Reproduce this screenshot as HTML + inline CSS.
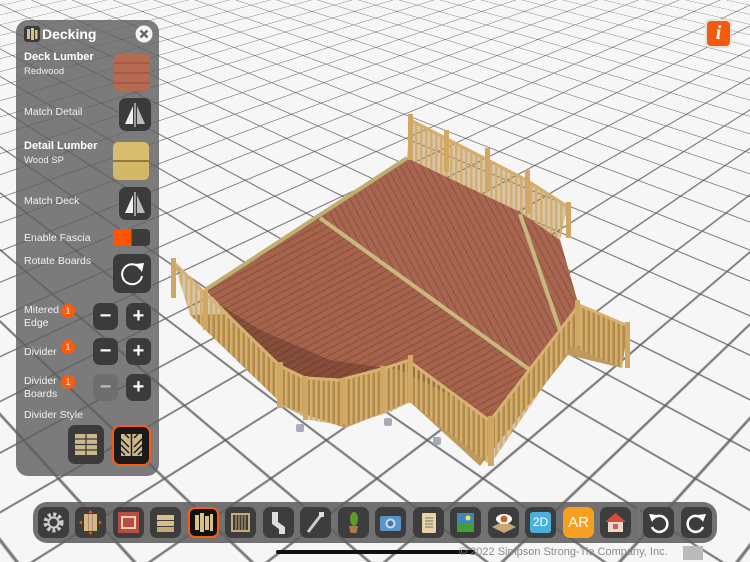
<!DOCTYPE html>
<html><head><meta charset="utf-8"><style>
*{margin:0;padding:0;box-sizing:border-box}
body{width:750px;height:562px;overflow:hidden;background:#f4f4f4;font-family:"Liberation Sans",sans-serif;position:relative}
#scene{position:absolute;left:0;top:0;width:750px;height:562px;overflow:hidden;perspective:845px;perspective-origin:375px 281px}
#plane{position:absolute;left:-1625px;top:-1719px;width:4000px;height:4000px;transform-origin:2000px 2000px;transform:rotateX(55.5deg) rotateZ(45deg);
background-image:linear-gradient(90deg,rgba(90,90,90,.8) 2px,transparent 2px),linear-gradient(0deg,rgba(90,90,90,.8) 2px,transparent 2px);background-size:56px 56px;background-color:#f6f6f6}
.abs{position:absolute}
#panel{position:absolute;left:16px;top:20px;width:143px;height:456px;background:rgba(95,95,95,.82);border-radius:12px}
.t{position:absolute;color:#f2f2f2;font-size:10.5px;white-space:nowrap}
.b{font-weight:bold;color:#fff;font-size:11px}
.s{font-size:9.5px}
.btn{position:absolute;background:#3b3b3b;border-radius:7px}
.badge{position:absolute;width:14px;height:14px;border-radius:7px;background:#ff5a0a;color:#fff;font-size:9px;text-align:center;line-height:14px}
.pm{color:#fff;font-size:20px;font-weight:bold;text-align:center;line-height:26px}
#bar{position:absolute;left:33px;top:502px;width:684px;height:41px;background:rgba(95,95,95,.88);border-radius:14px}
.tb{position:absolute;top:5px;width:31px;height:31px;background:#3d3d3d;border-radius:7px}
</style></head><body>
<div id="scene"><div id="plane"></div></div>
<svg class="abs" style="left:0;top:0" width="750" height="562">
<defs>
<pattern id="bd" width="6" height="6" patternUnits="userSpaceOnUse" patternTransform="rotate(-28)"><rect width="6" height="6" fill="#a5634c"/><rect width="6" height="1" fill="#8a4e3b"/></pattern>
<pattern id="bd2" width="6" height="6" patternUnits="userSpaceOnUse" patternTransform="rotate(62)"><rect width="6" height="6" fill="#a86650"/><rect width="6" height="1" fill="#8e503e"/></pattern>
<pattern id="bal" width="5" height="10" patternUnits="userSpaceOnUse"><rect width="5" height="10" fill="rgba(150,110,50,.35)"/><rect width="2.5" height="10" fill="#d4ae6a"/></pattern>
</defs>
<polygon points="190,315 285,407 345,428 410,402 480,466 568,355 622,368 628,327 577,305" fill="#c09a5c"/>
<polygon points="407,158 520,212 560,240 578,303 490,420 410,362 385,368 340,380 305,378 280,365 205,290 218,280" fill="url(#bd)"/>
<polygon points="407,158 520,212 560,240 578,303 530,370 320,218" fill="url(#bd2)"/>
<polyline points="407,158 205,290" stroke="#bfae70" stroke-width="4" fill="none"/>
<line x1="320" y1="218" x2="530" y2="370" stroke="#c8b87e" stroke-width="4"/>
<line x1="520" y1="214" x2="560" y2="330" stroke="#c8b87e" stroke-width="4"/>
<polygon points="205,295 280,365 305,378 340,380 385,368 410,362 480,412 470,405 400,370 330,360 260,330" fill="rgba(60,30,20,.3)"/>
<polygon points="410,118 526,178 568,205 560,240 520,212 407,158" fill="url(#bal)"/>
<polyline points="410,120 526,180 568,207" stroke="#d4ae6a" stroke-width="3" fill="none"/>
<g fill="#d0a864"><rect x="408" y="114" width="5" height="46"/><rect x="444" y="130" width="5" height="42"/><rect x="485" y="148" width="5" height="42"/><rect x="525" y="170" width="5" height="44"/><rect x="566" y="202" width="5" height="36"/></g>
<polygon points="173,260 280,365 285,407 190,315" fill="url(#bal)"/>
<polyline points="173,262 280,366" stroke="#d8b270" stroke-width="3" fill="none"/>
<polygon points="280,365 305,378 340,380 385,368 410,360 410,402 390,412 345,426 310,420 285,407" fill="url(#bal)"/>
<polyline points="280,366 305,378 340,380 385,368 410,360" stroke="#d8b270" stroke-width="3" fill="none"/>
<polygon points="410,360 490,420 490,465 410,402" fill="url(#bal)"/>
<polygon points="490,420 577,307 570,348 490,465" fill="url(#bal)"/>
<polyline points="410,362 490,421 577,308" stroke="#d8b270" stroke-width="3" fill="none"/>
<polygon points="577,303 628,325 622,368 570,345" fill="url(#bal)"/>
<polyline points="577,304 628,326" stroke="#d8b270" stroke-width="3" fill="none"/>
<g fill="#d0a864"><rect x="171" y="258" width="5" height="40"/><rect x="203" y="290" width="5" height="40"/><rect x="277" y="362" width="6" height="46"/><rect x="303" y="376" width="5" height="44"/><rect x="340" y="378" width="5" height="46"/><rect x="380" y="366" width="5" height="46"/><rect x="408" y="355" width="5" height="48"/><rect x="488" y="416" width="6" height="50"/><rect x="575" y="300" width="5" height="46"/><rect x="625" y="322" width="5" height="46"/></g>
<g fill="#aab"><rect x="296" y="424" width="8" height="8" rx="2"/><rect x="384" y="418" width="8" height="8" rx="2"/><rect x="433" y="437" width="8" height="8" rx="2"/></g>
</svg>
<div class="abs" style="left:705px;top:19px;width:27px;height:29px;border-radius:5px;background:#e9e0dc"></div>
<div class="abs" style="left:707px;top:21px;width:23px;height:25px;border-radius:4px;background:#f25a0f;color:#fff;font:italic bold 20px 'Liberation Serif',serif;text-align:center;line-height:25px">i</div>

<div id="panel"></div>
<svg class="abs" style="left:24px;top:26px" width="16" height="16"><rect width="16" height="16" rx="3" fill="#3a3a3a"/><rect x="3" y="3" width="3" height="10" fill="#d8c08a"/><rect x="7" y="2" width="3" height="12" fill="#d8c08a"/><rect x="11" y="4" width="2.5" height="9" fill="#d8c08a"/></svg>
<div class="t b" style="left:42px;top:26px;font-size:14px">Decking</div>
<svg class="abs" style="left:135px;top:25px" width="18" height="18"><circle cx="9" cy="9" r="8.5" fill="#f4f4f4"/><path d="M5.5 5.5L12.5 12.5M12.5 5.5L5.5 12.5" stroke="#666" stroke-width="2.6"/></svg>
<div class="t b" style="left:24px;top:51px">Deck Lumber</div>
<div class="t s" style="left:24px;top:66px">Redwood</div>
<div class="abs" style="left:114px;top:54px;width:36px;height:37px;border-radius:5px;background:repeating-linear-gradient(180deg,#b66a52 0 8px,#a45a44 8px 10px);"></div>
<div class="t" style="left:24px;top:106px">Match Detail</div>
<div class="btn" style="left:119px;top:98px;width:32px;height:33px"></div>
<svg class="abs" style="left:119px;top:98px" width="32" height="33"><polygon points="14,8 14,26 6,26" fill="#eee"/><polygon points="18,8 18,26 26,26" fill="#bbb"/><line x1="16" y1="5" x2="16" y2="29" stroke="#fff" stroke-width="1"/></svg>
<div class="t b" style="left:24px;top:140px">Detail Lumber</div>
<div class="t s" style="left:24px;top:155px">Wood SP</div>
<div class="abs" style="left:113px;top:142px;width:36px;height:38px;border-radius:5px;background:linear-gradient(180deg,#d9bd6e 0 48%,#8d7840 48% 52%,#d2b766 52%)"></div>
<div class="t" style="left:24px;top:195px">Match Deck</div>
<div class="btn" style="left:119px;top:187px;width:32px;height:33px"></div>
<svg class="abs" style="left:119px;top:187px" width="32" height="33"><polygon points="14,8 14,26 6,26" fill="#eee"/><polygon points="18,8 18,26 26,26" fill="#bbb"/><line x1="16" y1="5" x2="16" y2="29" stroke="#fff" stroke-width="1"/></svg>
<div class="t" style="left:24px;top:232px">Enable Fascia</div>
<div class="abs" style="left:113px;top:229px;width:37px;height:17px;border-radius:4px;background:linear-gradient(90deg,#ff5500 50%,#3b3b3b 50%)"></div>
<div class="t" style="left:24px;top:255px">Rotate Boards</div>
<div class="btn" style="left:113px;top:254px;width:38px;height:39px"></div>
<svg class="abs" style="left:113px;top:254px" width="38" height="39"><path d="M27 14A10 10 0 1 0 29 22" stroke="#fff" stroke-width="2" fill="none"/><polygon points="22,10 31,9 29,18" fill="#fff"/></svg>
<div class="t" style="left:24px;top:304px;line-height:13px">Mitered<br>Edge</div>
<div class="badge" style="left:61px;top:304px">1</div>
<div class="btn pm" style="left:93px;top:303px;width:25px;height:27px">−</div>
<div class="btn pm" style="left:126px;top:303px;width:25px;height:27px">+</div>
<div class="t" style="left:24px;top:346px">Divider</div>
<div class="badge" style="left:61px;top:340px">1</div>
<div class="btn pm" style="left:93px;top:338px;width:25px;height:27px">−</div>
<div class="btn pm" style="left:126px;top:338px;width:25px;height:27px">+</div>
<div class="t" style="left:24px;top:375px;line-height:13px">Divider<br>Boards</div>
<div class="badge" style="left:61px;top:375px">1</div>
<div class="btn pm" style="left:93px;top:374px;width:25px;height:27px;background:#6e6e6e;color:#bbb">−</div>
<div class="btn pm" style="left:126px;top:374px;width:25px;height:27px">+</div>
<div class="t" style="left:24px;top:409px">Divider Style</div>
<div class="btn" style="left:68px;top:425px;width:36px;height:39px"></div>
<svg class="abs" style="left:68px;top:425px" width="36" height="39"><rect x="7" y="9" width="22" height="21" fill="#cdb88a"/><path d="M18 9V30M7 14H29M7 19.5H29M7 25H29" stroke="#3b3b3b" stroke-width="1.3"/></svg>
<div class="abs" style="left:112px;top:425px;width:39px;height:41px;border-radius:8px;background:#1a1a1a;border:2px solid #ff5a0a"></div>
<svg class="abs" style="left:112px;top:425px" width="39" height="41"><rect x="9" y="9" width="21" height="22" fill="#cdb88a"/><path d="M19.5 9V31M9 14L17 22M9 20L17 28M9 26L13 30M30 14L22 22M30 20L22 28M30 26L26 30M13 9L17 13M26 9L22 13" stroke="#1a1a1a" stroke-width="1.5"/></svg>

<div id="bar">
<div class="tb" style="left:5px"><svg width="31" height="31"><circle cx="15.5" cy="15.5" r="8" stroke="#ccc" stroke-width="4" fill="none" stroke-dasharray="3 2.3"/><circle cx="15.5" cy="15.5" r="5" stroke="#ccc" stroke-width="2" fill="none"/></svg></div>
<div class="tb" style="left:42px"><svg width="31" height="31"><rect x="9" y="7" width="13" height="17" fill="#d9b879"/><path d="M13.5 7V24M17.5 7V24" stroke="#a88"/><path d="M15.5 3l2 3h-4zM15.5 28l2-3h-4zM4 15.5l3-2v4zM27 15.5l-3-2v4z" fill="#ff5a0a"/></svg></div>
<div class="tb" style="left:80px"><svg width="31" height="31"><rect x="5" y="5" width="21" height="21" fill="#b84c48"/><rect x="9" y="10" width="13" height="11" stroke="#f0d8a0" stroke-width="2" fill="none"/></svg></div>
<div class="tb" style="left:117px"><svg width="31" height="31"><rect x="7" y="8" width="17" height="5" fill="#d9bd86"/><rect x="7" y="14" width="17" height="5" fill="#d9bd86"/><rect x="7" y="20" width="17" height="5" fill="#c7a870"/></svg></div>
<div class="tb" style="left:155px;background:#111;border:2px solid #ff5a0a"><svg width="27" height="27"><rect x="5" y="6" width="4" height="15" fill="#d9c18c"/><rect x="10" y="4" width="4" height="19" fill="#d9c18c"/><rect x="15" y="7" width="4" height="14" fill="#d9c18c"/><rect x="20" y="5" width="3" height="17" fill="#d9c18c"/></svg></div>
<div class="tb" style="left:192px"><svg width="31" height="31"><rect x="7" y="7" width="17" height="17" stroke="#c8aa78" stroke-width="2" fill="none"/><path d="M11 7V24M14 7V24M17 7V24M20 7V24" stroke="#c8aa78"/></svg></div>
<div class="tb" style="left:230px"><svg width="31" height="31"><path d="M9 5h6v10l7 5v7h-6v-5l-7-5z" fill="#ddd"/></svg></div>
<div class="tb" style="left:267px"><svg width="31" height="31"><path d="M8 25L21 8" stroke="#ccc" stroke-width="3"/><rect x="19" y="5" width="5" height="5" fill="#ddd"/></svg></div>
<div class="tb" style="left:305px"><svg width="31" height="31"><path d="M11 19h9l-1.5 7h-6z" fill="#b07a4a"/><ellipse cx="16" cy="12" rx="4" ry="7" fill="#5c9a2c"/></svg></div>
<div class="tb" style="left:342px"><svg width="31" height="31"><rect x="5" y="9" width="21" height="15" rx="2" fill="#5a94c8"/><circle cx="15.5" cy="16.5" r="5" fill="#cde"/><circle cx="15.5" cy="16.5" r="3" fill="#4a78a8"/></svg></div>
<div class="tb" style="left:380px"><svg width="31" height="31"><rect x="9" y="6" width="14" height="20" rx="1" fill="#e8d2a6"/><path d="M12 11h8M12 14h8M12 17h8M12 20h8" stroke="#776"/></svg></div>
<div class="tb" style="left:417px"><svg width="31" height="31"><rect x="7" y="6" width="17" height="19" fill="#3a8ab8"/><rect x="7" y="17" width="17" height="8" fill="#4a9a3a"/><circle cx="18" cy="11" r="2.5" fill="#fd5"/></svg></div>
<div class="tb" style="left:455px"><svg width="31" height="31"><polygon points="4,20 16,14 28,20 16,26" fill="#c9a876"/><ellipse cx="16" cy="12" rx="8" ry="5" fill="#fff"/><circle cx="16" cy="12" r="3.5" fill="#c8602a"/></svg></div>
<div class="tb" style="left:492px"><div style="margin:5px;width:21px;height:21px;background:#4ab0e0;border-radius:3px;color:#fff;font-size:12px;text-align:center;line-height:21px">2D</div></div>
<div class="tb" style="left:530px;background:#f5a020;color:#fff;font-size:15px;text-align:center;line-height:31px">AR</div>
<div class="tb" style="left:567px"><svg width="31" height="31"><polygon points="5,15 15.5,6 26,15" fill="#d84a3a"/><rect x="8" y="15" width="15" height="10" fill="#f0d8c8"/><rect x="13" y="17" width="5" height="5" fill="#b66"/></svg></div>
<div class="abs" style="left:605px;top:6px;width:2px;height:29px;background:#777"></div>
<div class="tb" style="left:610px"><svg width="31" height="31"><path d="M10 12A8 8 0 1 1 9 20" stroke="#fff" stroke-width="2.5" fill="none"/><polygon points="6,7 14,8 9,15" fill="#fff"/></svg></div>
<div class="tb" style="left:648px"><svg width="31" height="31"><path d="M21 12A8 8 0 1 0 22 20" stroke="#fff" stroke-width="2.5" fill="none"/><polygon points="25,7 17,8 22,15" fill="#fff"/></svg></div>
</div>
<div class="abs" style="left:276px;top:550px;width:199px;height:4px;border-radius:2px;background:#111"></div>
<div class="abs" style="left:459px;top:546px;color:#8a8a8a;font-size:11px;white-space:nowrap">© 2022 Simpson Strong-Tie Company, Inc.</div>
<div class="abs" style="left:683px;top:546px;width:20px;height:14px;background:#bbb"></div>
</body></html>
